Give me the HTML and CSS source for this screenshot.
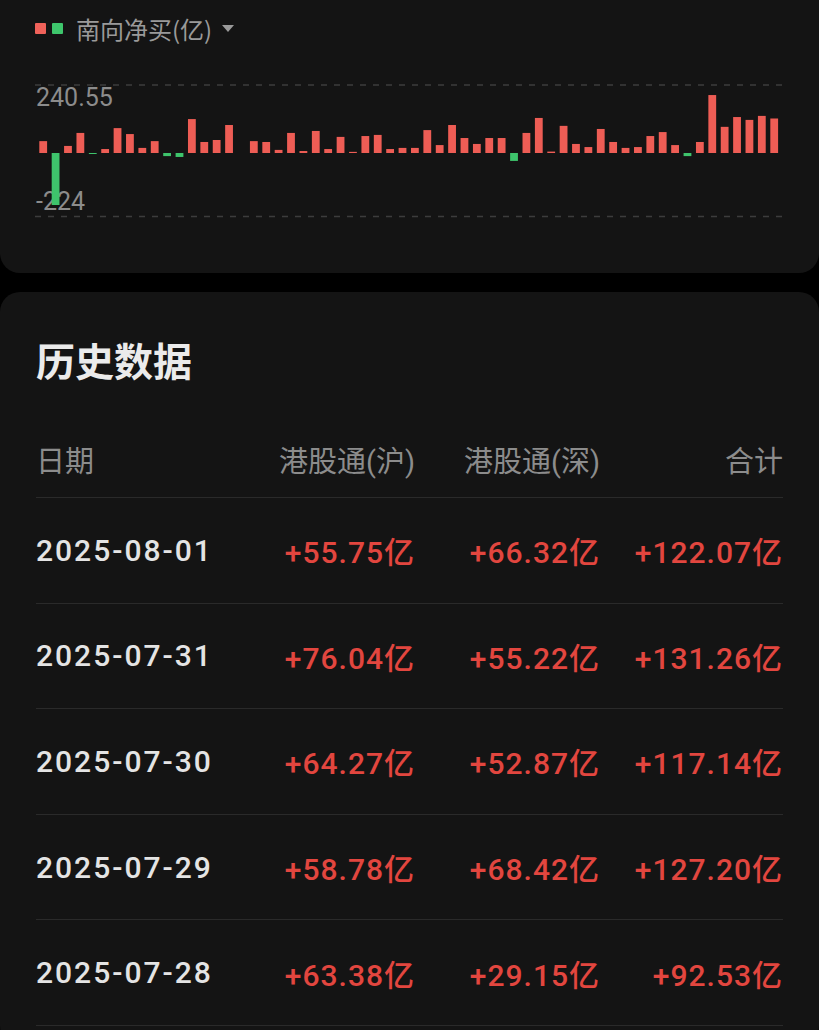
FILE: index.html
```html
<!DOCTYPE html>
<html lang="zh-CN">
<head>
  <meta charset="UTF-8" />
  <meta name="viewport" content="width=device-width, initial-scale=1.0"/>
  <title>南向资金 - 历史数据</title>
  <link rel="stylesheet" href="styles.css">
</head>
<body>

  <section class="chart-card">
    <div class="legend">
      <span class="dot dot-up"></span>
      <span class="dot dot-down"></span>
      <span class="legend-title">南向净买(亿)</span>
      <span class="caret"></span>
    </div>
    <svg class="flow-chart" width="748" height="142" viewBox="0 0 748 142">
      <line class="grid-line" x1="0" y1="5" x2="748" y2="5"/>
      <line class="grid-line" x1="0" y1="136.5" x2="748" y2="136.5"/>
      <text class="axis-label" x="1" y="26">240.55</text>
      <text class="axis-label" x="1" y="130">-224</text>
      <g id="bars"></g>
    </svg>
  </section>

  <section class="history-card">
    <h2>历史数据</h2>
    <div class="table">
      <div class="row head">
        <span>日期</span>
        <span>港股通(沪)</span>
        <span>港股通(深)</span>
        <span>合计</span>
      </div>
      <div id="rows">
        <!-- rows are filled in below -->
      </div>
    </div>
  </section>

  <script>
    // net southbound buying per day, oldest first (亿)
    const flows = [
      42, -184, 25, 71, -3, 14, 88, 67, 18, 42,
      -11, -14, 120, 39, 46, 99, 0, 42, 39, 11,
      71, 7, 78, 14, 57, 4, 60, 64, 14, 18,
      18, 81, 28, 99, 53, 32, 53, 53, -28, 71,
      124, 5, 96, 32, 21, 85, 39, 18, 21, 60,
      74, 28, -11, 39, 205, 92.53, 127.20, 117.14, 131.26, 122.07
    ];

    const history = [
      { date: "2025-08-01", sh: 55.75, sz: 66.32, total: 122.07 },
      { date: "2025-07-31", sh: 76.04, sz: 55.22, total: 131.26 },
      { date: "2025-07-30", sh: 64.27, sz: 52.87, total: 117.14 },
      { date: "2025-07-29", sh: 58.78, sz: 68.42, total: 127.20 },
      { date: "2025-07-28", sh: 63.38, sz: 29.15, total: 92.53 },
    ];

    const zeroY = 73;
    const scale = 68 / 240.55;
    const step = 12.39;
    const barWidth = 7.8;

    function drawBars() {
      const g = document.getElementById("bars");
      flows.forEach((v, i) => {
        if (v === 0) return;
        const h = Math.max(Math.abs(v) * scale, 1);
        const rect = document.createElementNS("http://www.w3.org/2000/svg", "rect");
        rect.setAttribute("x", (4.3 + i * step).toFixed(2));
        rect.setAttribute("y", v > 0 ? (zeroY - h).toFixed(2) : zeroY);
        rect.setAttribute("width", barWidth);
        rect.setAttribute("height", h.toFixed(2));
        rect.setAttribute("class", v > 0 ? "bar-up" : "bar-down");
        g.appendChild(rect);
      });
    }

    function fmt(v) {
      return (v >= 0 ? "+" : "") + v.toFixed(2) + "亿";
    }

    function displayRows() {
      const rows = document.getElementById("rows");
      rows.innerHTML = "";
      history.forEach((day) => {
        const div = document.createElement("div");
        div.className = "row";
        div.innerHTML = `
          <span class="date">${day.date}</span>
          <span class="${day.sh >= 0 ? "up" : "down"}">${fmt(day.sh)}</span>
          <span class="${day.sz >= 0 ? "up" : "down"}">${fmt(day.sz)}</span>
          <span class="${day.total >= 0 ? "up" : "down"}">${fmt(day.total)}</span>
        `;
        rows.appendChild(div);
      });
    }

    drawBars();
    displayRows();
  </script>

</body>
</html>
```

FILE: styles.css
```css
html, body {
  margin: 0;
  padding: 0;
  background: #000;
  font-family: Roboto, "Noto Sans CJK SC", sans-serif;
}

.chart-card {
  background: #141414;
  border-radius: 0 0 20px 20px;
  padding: 12px 36px 51px 35px;
}

.legend {
  display: flex;
  align-items: center;
  height: 32px;
}

.dot {
  width: 11px;
  height: 11px;
  border-radius: 1px;
  margin-right: 6px;
}

.dot-up {
  background: #f0625a;
}

.dot-down {
  background: #3ec66c;
  margin-right: 13px;
}

.legend-title {
  font-family: "Noto Sans CJK SC", sans-serif;
  font-size: 24px;
  color: #9a9a9a;
}

.caret {
  width: 0;
  height: 0;
  margin-left: 10px;
  border-left: 6.5px solid transparent;
  border-right: 6.5px solid transparent;
  border-top: 7px solid #9a9a9a;
}

.flow-chart {
  display: block;
  margin-top: 36px;
}

.grid-line {
  stroke: #3c3c3c;
  stroke-width: 1.5;
  stroke-dasharray: 6 7;
}

.axis-label {
  font-family: Roboto, sans-serif;
  font-size: 25px;
  fill: #8c8c8c;
}

.bar-up {
  fill: #ee5d55;
}

.bar-down {
  fill: #3ec46c;
}

.history-card {
  margin-top: 19px;
  background: #141414;
  border-radius: 20px;
  padding: 46px 36px 20px;
}

.history-card h2 {
  margin: 0 0 32px;
  font-size: 39px;
  line-height: 50px;
  font-weight: 700;
  color: #ebebeb;
}

.row {
  display: grid;
  grid-template-columns: 1fr 185px 185px 183px;
  align-items: center;
  box-sizing: border-box;
  height: 105.6px;
  border-bottom: 1px solid #2a2a2a;
  font-size: 30px;
  font-weight: 500;
  letter-spacing: 1px;
}

.row span {
  text-align: right;
  white-space: nowrap;
}

.row span:first-child {
  text-align: left;
}

.row.head {
  height: 78px;
  font-size: 29px;
  font-weight: 400;
  letter-spacing: 0;
  color: #8c8c8c;
}

.date {
  color: #e4e4e4;
  letter-spacing: 2px;
}

.up {
  color: #e2463f;
}

.down {
  color: #3ec46c;
}
```
